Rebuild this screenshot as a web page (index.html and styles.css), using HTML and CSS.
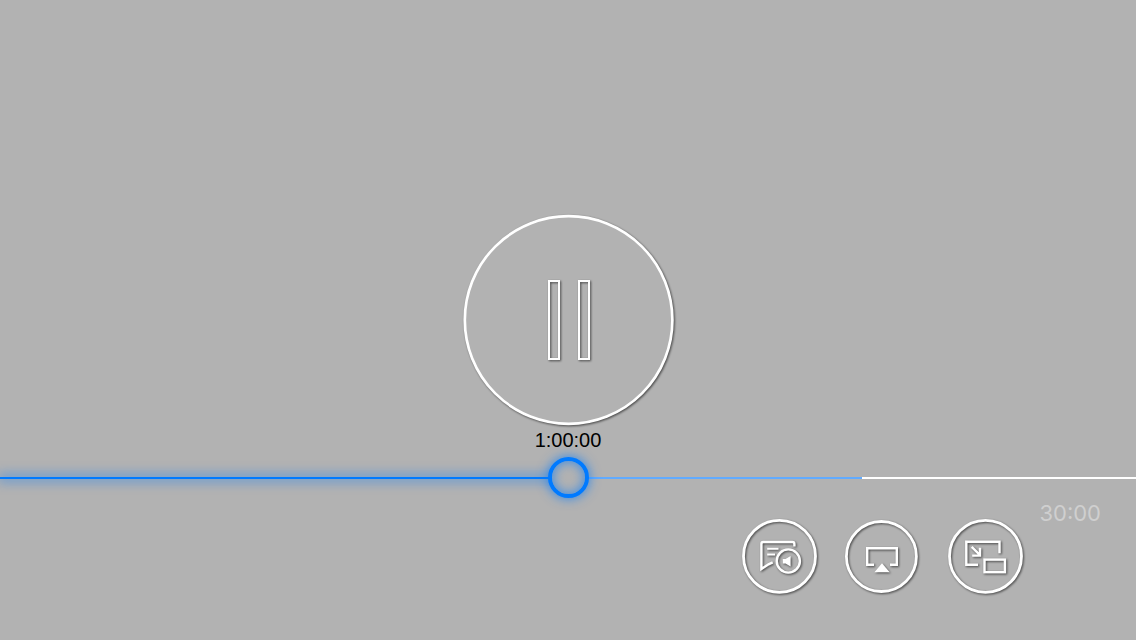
FILE: index.html
```html
<!DOCTYPE html>
<html lang="en">
<head>
<meta charset="utf-8">
<meta name="viewport" content="width=device-width, initial-scale=1">
<title>Video player</title>
<link rel="stylesheet" href="styles.css">
</head>
<body>
<main class="player">
  <div class="stage">
    <button class="pause" type="button" aria-label="Pause">
      <svg class="icon" width="212" height="212" viewBox="0 0 212 212" aria-hidden="true">
        <circle class="disc" cx="106.6" cy="106" r="103.8" stroke-width="2.7"/>
        <rect x="87" y="67" width="10" height="78" stroke-width="2"/>
        <rect x="117" y="67" width="10" height="78" stroke-width="2"/>
      </svg>
    </button>
  </div>
  <div class="timeline">
    <label class="elapsed" for="seek">1:00:00</label>
    <div class="track">
      <input class="seek" id="seek" type="range" min="0" max="7200" value="3600">
    </div>
  </div>
  <div class="controls">
    <div class="buttons">
      <button class="control" type="button" aria-label="Audio and subtitles">
        <svg class="icon" width="76" height="76" viewBox="0 0 76 76" aria-hidden="true">
          <circle cx="37.5" cy="38.3" r="36" stroke-width="2.8"/>
          <path d="M52.4 28.4V26Q52.4 24 50.4 24H21.2Q19.4 24 19.4 25.8V51L26.5 46.3L30.7 44.4"/>
          <path d="M25.2 30.8H36.5M25.2 36.4H33" stroke-width="2"/>
          <circle cx="46.3" cy="43" r="11.6"/>
          <path class="solid" d="M40.8 41H43.5L48.6 38V48.5L43.5 45.4H40.8Z"/>
        </svg>
      </button>
      <button class="control" type="button" aria-label="AirPlay">
        <svg class="icon" width="76" height="76" viewBox="0 0 76 76" aria-hidden="true">
          <circle cx="36.4" cy="38.5" r="35" stroke-width="2.8"/>
          <path d="M29 46.8H22.2V30.2H51.8V46.8H45"/>
          <path class="solid" d="M37 45.3L44.7 54.3H29.4Z"/>
        </svg>
      </button>
      <button class="control" type="button" aria-label="Picture in picture">
        <svg class="icon" width="76" height="76" viewBox="0 0 76 76" aria-hidden="true">
          <circle cx="37.5" cy="38.3" r="36" stroke-width="2.8"/>
          <path d="M30 46.7H18.3V23.8H51.5V35.3"/>
          <path d="M23.7 28.9L31.5 36.7M32 29.8V37.6H24.2"/>
          <rect x="36.5" y="41.6" width="20.4" height="12.6"/>
        </svg>
      </button>
    </div>
    <span class="remaining">30:00</span>
  </div>
</main>
</body>
</html>
```
FILE: styles.css
```css
* {
  box-sizing: border-box;
}

body {
  margin: 0;
  background: #b2b2b2;
  font-family: "Liberation Sans", Arial, sans-serif;
}

.player {
  display: grid;
  grid-template-rows: 1fr auto auto;
  min-height: 100vh;
  overflow: hidden;
}

.stage {
  display: flex;
  justify-content: center;
  align-items: flex-end;
}

button {
  display: block;
  padding: 0;
  border: 0;
  border-radius: 50%;
  background: none;
  cursor: pointer;
}

.icon {
  display: block;
  overflow: visible;
  fill: none;
  stroke: #fff;
  stroke-width: 2.4;
}

.icon > * {
  filter: drop-shadow(1px 1px 1px rgb(0 0 0 / 60%));
}

.disc {
  fill: #b2b2b2;
}

.solid {
  fill: #fff;
  stroke: none;
}

.timeline {
  display: flex;
  flex-direction: column;
}

.elapsed {
  padding-top: 2px;
  font-size: 20px;
  line-height: 24px;
  text-align: center;
  color: #000;
}

.track {
  display: grid;
  align-items: center;
  margin-top: 4px;
}

.track::before {
  content: "";
  grid-area: 1 / 1;
  width: 50%;
  height: 2px;
  box-shadow: 0 0 12px 2px rgb(0 122 255 / 60%);
}

.seek {
  grid-area: 1 / 1;
  appearance: none;
  width: 100%;
  height: 44px;
  margin: 0;
  background: none;
  cursor: pointer;
}

.seek::-webkit-slider-runnable-track {
  display: flex;
  align-items: center;
  height: 42px;
  background: linear-gradient(90deg, #007aff 50%, #61abff 50% 75.9%, #fff 75.9%) center / 100% 2px no-repeat;
}

.seek::-webkit-slider-thumb {
  appearance: none;
  width: 41px;
  height: 41px;
  border: 4px solid #007aff;
  border-radius: 50%;
  background: #b2b2b2;
  box-shadow: 0 0 12px rgb(0 122 255 / 80%), inset 0 0 12px rgb(0 122 255 / 70%);
}

.controls {
  display: flex;
  justify-content: flex-end;
  gap: 15px;
  padding: 0 35px 46px 16px;
}

.buttons {
  display: flex;
  gap: 27px;
  padding-top: 18px;
}

.remaining {
  font-family: Inter, sans-serif;
  font-size: 22px;
  line-height: 26px;
  color: #cfcfcf;
}
```
